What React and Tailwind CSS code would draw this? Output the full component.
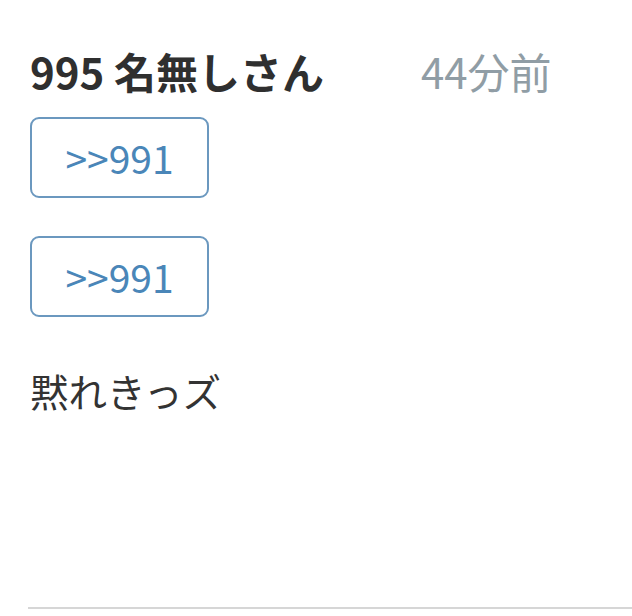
const FONT = "font-['Noto_Sans_CJK_JP','Noto_Sans',sans-serif]";

const QuoteLink = ({ to }) => (
  <button className="flex h-[81px] w-[179px] items-center justify-center rounded-[9px] border-2 border-[#6b98bf] text-[39px] leading-none text-[#4a86b8]">
    &gt;&gt;{to}
  </button>
);

export default function App() {
  const post = {
    no: 995,
    name: "名無しさん",
    ago: "44分前",
    anchors: [991, 991],
    body: "黙れきっズ",
  };

  return (
    <div className={`min-h-[616px] w-[632px] bg-white pl-[30px] pt-[41px] ${FONT}`}>
      <div className="flex items-center text-[42px] leading-[60px]">
        <span className="font-bold text-[#2f2f2f]">
          {post.no} {post.name}
        </span>
        <span className="ml-[97px] text-[#909da5]">{post.ago}</span>
      </div>

      <div className="mt-[16px] flex flex-col gap-[38px]">
        {post.anchors.map((a, i) => (
          <QuoteLink key={i} to={a} />
        ))}
      </div>

      <p className="mt-[43px] text-[38.5px] leading-[60px] text-[#333]">{post.body}</p>

      <div className="-ml-[2px] mt-[187px] border-t-2 border-[#d6d6d6]" />
    </div>
  );
}
